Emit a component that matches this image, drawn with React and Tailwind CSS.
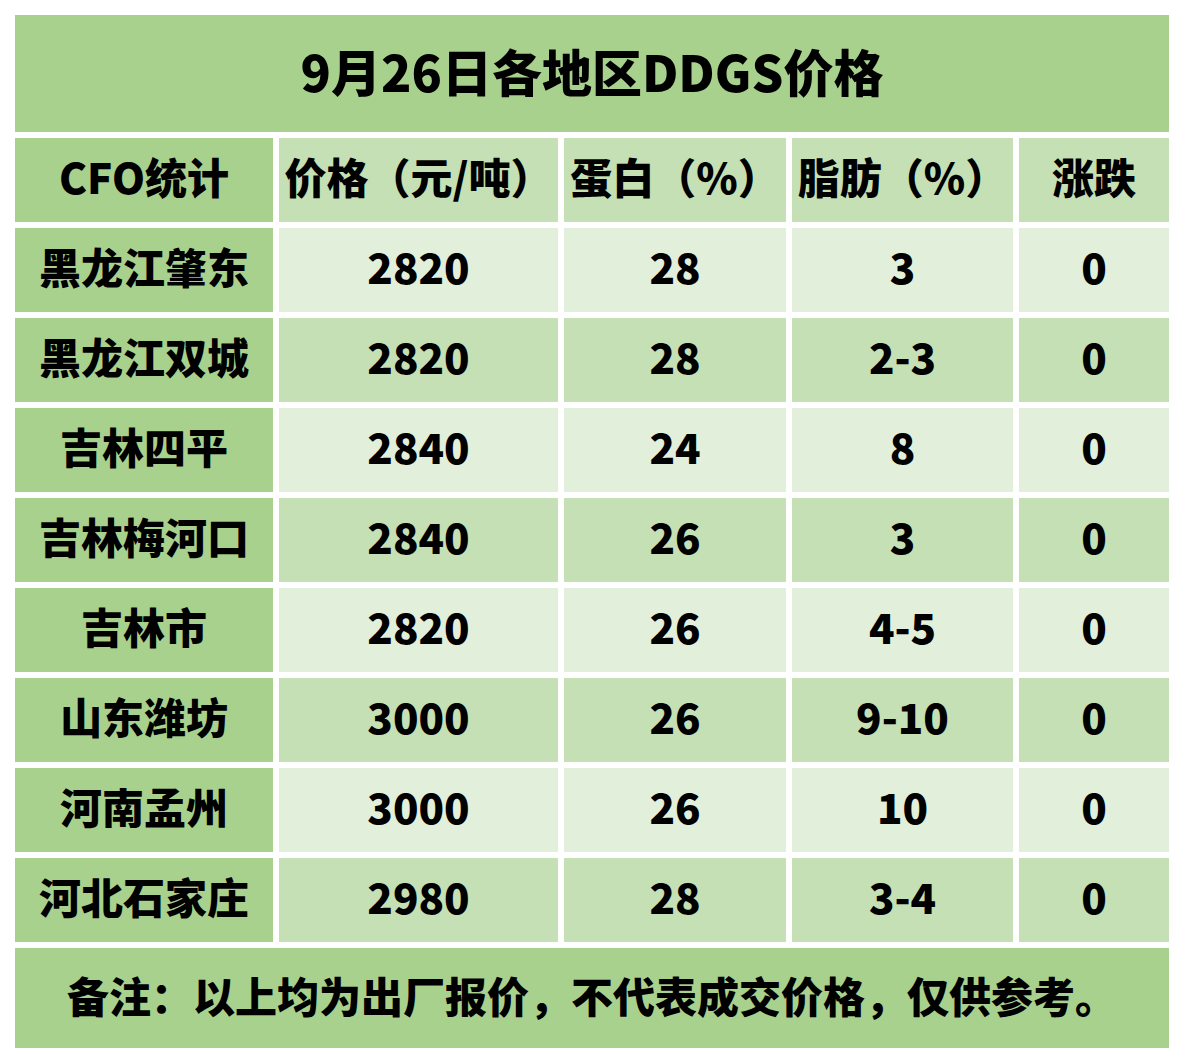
import React from "react";

const rows = [
  ["黑龙江肇东", "2820", "28", "3", "0"],
  ["黑龙江双城", "2820", "28", "2-3", "0"],
  ["吉林四平", "2840", "24", "8", "0"],
  ["吉林梅河口", "2840", "26", "3", "0"],
  ["吉林市", "2820", "26", "4-5", "0"],
  ["山东潍坊", "3000", "26", "9-10", "0"],
  ["河南孟州", "3000", "26", "10", "0"],
  ["河北石家庄", "2980", "28", "3-4", "0"],
];

const headers = ["CFO统计", "价格（元/吨）", "蛋白（%）", "脂肪（%）", "涨跌"];

export default function App() {
  return (
    <div
      className="w-[1185px] h-[1064px] bg-white pt-[15px] pl-[15px] text-black font-black"
      style={{ fontFamily: '"Noto Sans CJK SC", "Noto Sans", sans-serif' }}
    >
      <div className="w-[1154px] h-[117px] bg-[#a9d18e] flex items-center justify-center pb-[8px] text-[50px] leading-none">
        9月26日各地区DDGS价格
      </div>
      <div className="mt-[6px] w-[1154px] grid grid-cols-[258px_279px_222px_221px_150px] gap-x-[6px] gap-y-[6px] auto-rows-[84px] text-[42px] leading-none">
        {headers.map((h, i) => (
          <div
            key={h}
            className={
              "flex items-center justify-center whitespace-nowrap pb-[8px] " +
              (i === 0 ? "bg-[#a9d18e]" : "bg-[#c5e0b4]")
            }
          >
            {h}
          </div>
        ))}
        {rows.map((r, ri) =>
          r.map((c, ci) => (
            <div
              key={ri + "-" + ci}
              className={
                "flex items-center justify-center whitespace-nowrap pb-[8px] " +
                (ci === 0
                  ? "bg-[#a9d18e]"
                  : ri % 2 === 0
                  ? "bg-[#e2efda]"
                  : "bg-[#c5e0b4]")
              }
            >
              {c}
            </div>
          ))
        )}
      </div>
      <div className="mt-[6px] w-[1154px] h-[100px] bg-[#a9d18e] flex items-center justify-center pb-[6px] text-[42px] leading-none whitespace-nowrap">
        备注：以上均为出厂报价，不代表成交价格，仅供参考。
      </div>
    </div>
  );
}
